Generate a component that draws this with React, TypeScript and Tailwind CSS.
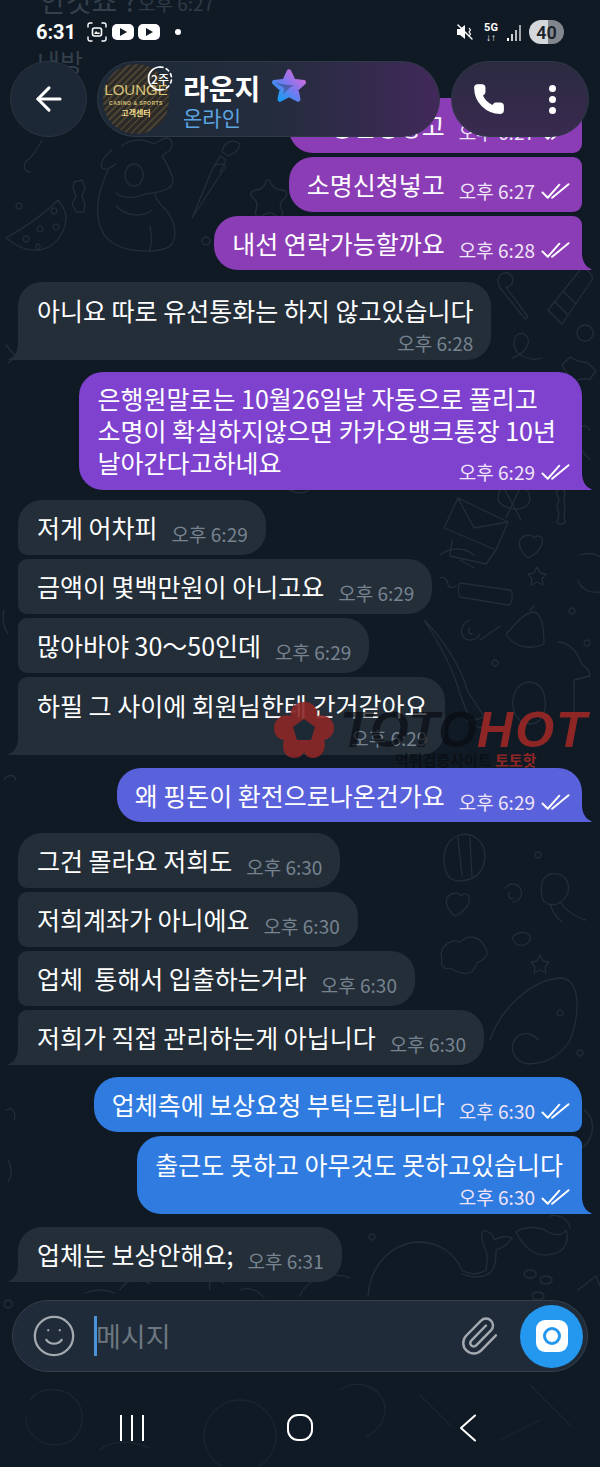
import React from 'react';
import { ArrowLeft, Phone, Smile, Paperclip } from 'lucide-react';

const KR = 'font-["Noto_Sans_CJK_KR","Noto_Sans",sans-serif]';

const DoubleCheck = () => (
  <svg viewBox="0 0 30 18" className="w-[29px] h-[18px]" fill="none" stroke="#ffffff" strokeWidth="2" strokeLinecap="round" strokeLinejoin="round">
    <path d="M1.500 10.500l5.500 5.500L19 2.500" />
    <path d="M11.500 16L28.500 2" />
  </svg>
);

interface MsgProps {
  side: 'in' | 'out';
  lines: string[];
  time: string;
  color?: string;
  tailColor?: string;
  first?: boolean;
  tail?: boolean;
  stacked?: boolean;
  inlineLast?: boolean;
  textPr?: string;
  top?: string;
}

const Msg = ({ side, lines, time, color = '', tailColor = '', first, tail, stacked, inlineLast, textPr = '', top = 'mt-1' }: MsgProps) => {
  const out = side === 'out';
  const shape = out
    ? `rounded-l-[24px] ${first ? 'rounded-tr-[24px]' : 'rounded-tr-[9px]'} ${tail ? 'rounded-br-none' : 'rounded-br-[9px]'}`
    : `rounded-r-[24px] ${first ? 'rounded-tl-[24px]' : 'rounded-tl-[9px]'} ${tail ? 'rounded-bl-none' : 'rounded-bl-[9px]'}`;
  const meta = (
    <div className={`flex items-center gap-[6px] text-[19px] leading-[24px] whitespace-nowrap ${out ? 'text-[#f0e4f8]' : 'text-[#77838f]'}`}>
      <span>{time}</span>
      {out && <DoubleCheck />}
    </div>
  );
  return (
    <div className={`flex ${top} ${out ? 'justify-end pr-[18px]' : 'justify-start pl-[18px]'}`}>
      <div className={`relative text-white ${shape} ${out ? `${color} pl-[18px] pr-[12px]` : 'bg-[#232e39] pl-[19px] pr-[18px]'}`}>
        {inlineLast ? (
          <div className="pt-[10px] pb-[12px]">
            {lines.slice(0, -1).map((l) => (
              <div key={l} className={`text-[25px] leading-[32px] whitespace-pre ${textPr}`}>{l}</div>
            ))}
            <div className="flex justify-between items-end">
              <div className="text-[25px] leading-[32px] whitespace-pre">{lines[lines.length - 1]}</div>
              <div className="-mb-[6px]">{meta}</div>
            </div>
          </div>
        ) : stacked ? (
          <div className="pt-[12px] pb-[5px]">
            {lines.map((l) => (
              <div key={l} className={`text-[25px] leading-[32px] whitespace-pre ${textPr}`}>{l}</div>
            ))}
            <div className="flex justify-end mt-[5px]">{meta}</div>
          </div>
        ) : (
          <div className={`${tail && out ? 'h-[54px]' : 'h-[55px]'} flex items-center gap-[14px]`}>
            <div className="text-[25px] leading-[32px] whitespace-pre -mt-[1px]">{lines[0]}</div>
            <div className="mt-[13px]">{meta}</div>
          </div>
        )}
        {tail && out && (
          <svg viewBox="0 0 12 16" className={`absolute -right-[10px] bottom-0 w-[12px] h-[16px] ${tailColor}`}>
            <path d="M0 0h2C2.500 8 6 13 11 15c1 .5 .5 1-.5 1H0z" fill="currentColor" />
          </svg>
        )}
        {tail && !out && (
          <svg viewBox="0 0 12 16" className="absolute -left-[10px] bottom-0 w-[12px] h-[16px] text-[#232e39]">
            <path d="M12 0h-2C9.500 8 6 13 1 15c-1 .5-.5 1 .5 1H12z" fill="currentColor" />
          </svg>
        )}
      </div>
    </div>
  );
};

// faint wallpaper doodles
const Doodles = () => (
  <svg viewBox="0 0 600 1467" className="absolute inset-0 w-[600px] h-[1467px]" fill="none" stroke="#212d39" strokeWidth="1.300" strokeLinecap="round" strokeLinejoin="round">
    {/* dog */}
    <path d="M112 150c-8 6-12 12-10 18 4 3 8 0 14-4M122 146c8-7 22-8 32-2 4-2 8-6 13-6 6 1 6 8 3 12l-8 6c5 7 8 14 10 20 3 6-1 12-7 14-8 3-18 3-25 6-10 3-20 1-24-3M134 164a9 11 0 1 0 .1 0" />
    <path d="M108 170c-8 18-14 36-8 56 4 14 18 22 32 24 14 2 34 2 40-6 6-10 2-26-8-36-4-4-8-8-9-14M150 226c2 10 2 16 0 24M116 206c10 10 26 12 36 4" />
    {/* brush */}
    <path d="M192 218l20-48c2-6 8-8 14-4l-34 52zM212 170l8-14 6 4-6 12M224 146c4-6 12-6 16-2-1 6-6 10-12 12l-6-4z" />
    {/* star */}
    <path d="M270 181c2 6 6 9 12 9 6 1 6 5 2 9-4 3-5 7-2 12 2 6-2 8-7 4-4-3-8-3-13 1-5 2-8-1-6-6 2-5 1-9-3-12-4-4-2-7 3-8 5 0 8-3 10-8 1-3 3-3 4-1z" />
    {/* watermelon */}
    <path d="M6 238c10 8 22 14 34 12 14-3 24-14 26-30 1-8-3-14-8-20-16 16-34 28-52 38zM26 236a3 3 0 1 0 .1 0M40 226a3 3 0 1 0 .1 0M56 224a3 3 0 1 0 .1 0M38 244a2 3 0 1 0 .1 0M54 208a3 3 0 1 0 .1 0" />
    {/* candy */}
    <path d="M74 182l8-2 3 8-3 8 3 8-1 8h-8l-4-8 4-8-3-8zM19 203a3 3 0 1 0 .1 0M206 237a4 4 0 1 0 .1 0" />
    <path d="M42 140c-4 8-8 14-14 20-6 4-4 12 2 12" />
    {/* upper right */}
    <path d="M500 275c4-3 10-3 12 2 2 5-1 10-6 10l22 30-3 2-24-30c-4-4-3-10-1-14zM548 310l32-40c4-4 14 4 12 10l-30 44zM555 302l12 12M564 292l12 12" />
    <path d="M512 358c8-2 14-8 16-14 2-8-6-14-12-8-4 6-2 16 6 20 10 4 14 4 20 2" />
    <path d="M562 365l8-8 8 4 10 2 8 8-6 8-10 0-6 4-6-8z" />
    <path d="M585 325a8 8 0 1 0 .1 0M590 430c-6-8-10-4-12 4-2 10 6 20 12 26M440 470c30 10 60 0 80-16" />
    {/* middle right */}
    <path d="M444 528l14-30 50 24-12 28zM458 498l16 30 34-6M452 540l-2 16 36 8 10-14" />
    <path d="M520 540c4-6 12-6 14-2 4-4 10-2 8 6-2 6-8 12-14 14-6-4-10-12-8-18z" />
    <path d="M498 500c4 10 28 14 32 0 0-14-14-20-26-14-4 2-6 8-6 14zM505 490l16 30M520 488l-14 30" />
    <path d="M556 492c2-4 8-4 9 0l-1 8 1 8-1 8 1 6c-1 3-7 3-8 0l2-8-2-8 2-6z" />
    <path d="M580 555c6-2 14-2 20 2M578 580c2 8 12 14 22 12" />
    <path d="M537 567l3 6 6 1-4 5 1 6-6-3-6 3 1-6-4-5 6-1z" />
    <path d="M460 583c-2 4-2 10 0 14l48 8c4 0 6-14 2-15zM440 578c4-2 8 2 8 6s4 4 8 2M572 608a3 3 0 1 0 .1 0M587 640a3 3 0 1 0 .1 0" />
    {/* bell, spiral, brush */}
    <path d="M506 634c8-8 18-22 28-22 8 2 10 18 10 32-12 6-30 4-38-10zM530 610l4-4M470 620c-6 2-10 8-8 14 2 8 14 8 18 0M470 628c-2 2-2 6 2 6" />
    <path d="M424 620c12 18 28 46 36 74l10 26c6 0 12-2 14-4l-16-24c-8-28-26-54-44-72zM466 720l14 8 10-8M495 660a3 3 0 1 0 .1 0" />
    <path d="M558 642c12 0 20 12 24 22 4 4 8 6 8 12l-16 4v44M516 690c8-12 24-10 28 4 4 16-2 30-14 30-14 0-22-18-14-34z" />
    {/* left / centre mid */}
    <path d="M6 345l10 12-8 6M4 610c-2 10 0 18 4 24M4 780c4-6 10-6 12 0M6 1110c8-4 10 4 8 10M8 1160c4 8 4 16 0 22" />
    {/* between bubbles */}
    <path d="M290 490c6 4 14 4 18 0M440 555c10-8 24-8 34 0M480 640l20-14M460 560l14 8" />
    {/* shell, heart, jellyfish */}
    <path d="M446 848c4-12 20-18 30-10 10 6 12 22 4 34-6 8-22 12-30 6-6-6-8-20-4-30zM458 838l4 38M470 838l2 38" />
    <path d="M447 898c4-6 12-6 14-2 4-4 10-2 8 6-2 6-8 12-14 14-6-4-10-12-8-18z" />
    <path d="M505 888a9 9 0 1 1 8 14M510 892a3 3 0 1 0 4 6" />
    <path d="M543 880c4-8 16-8 22-2 6 8 4 18-4 24-6 4-14 4-18-2-2-6-2-14 0-20zM550 904c2 6 6 14 12 18M560 902c4 6 12 14 26 18M538 852a3 3 0 1 0 .1 0" />
    <path d="M442 960c-4-12 8-22 18-18 8-8 20-6 24 4 6 6 2 14-6 16l-6 10c-10 4-18-2-22-4-6 2-10-2-8-8zM512 938c4-6 14-8 18-2 2 6-6 12-14 8zM540 955l3 6 6 1-4 5 1 6-6-3-6 3 1-6-4-5 6-1z" />
    <path d="M490 1040c10-30 40-60 70-62 18 0 20 26 14 50-4 22-24 36-46 36-14-2-20-16-12-26 6-6 16-6 22 2M560 1010a3 3 0 1 0 .1 0M580 1050a3 3 0 1 0 .1 0" />
    <path d="M584 1110c6 4 10 12 8 22-2 10-10 18-12 14" />
    {/* whale, cookie */}
    <path d="M368 1296c2-30 22-52 50-54 20 0 36 10 44 28 6 4 16 6 24 0 2-10 2-18-2-24-2-6-4-12 0-16 6 2 10 6 10 10 6-4 14-4 18-2-4 6-10 10-16 12 0 10 0 22-12 26-10 2-16 0-22-2" />
    <path d="M516 1232c8-6 24-6 32 0 8 4 14 4 18-2 4 12-2 22-14 24-12 4-26-2-36-22zM550 1216c8-2 18 2 20 12M372 1234a3 3 0 1 0 .1 0" />
    <path d="M530 1270a6 4 0 1 0 .1 0M546 1276a6 4 0 1 0 .1 0M538 1292a6 4 0 1 0 .1 0M578 1290l18-14 4 10" />
    <path d="M365 1152c-4-4-8 2-6 6M300 1296c6-16 30-26 50-18M210 1290c-4-12 10-14 14-6M120 1290c6-12 22-12 30-6M8 1300a4 4 0 1 0 .1 0M85 1293c10-4 20-4 30 0M240 1290c10-4 20 2 24 8" />
    {/* nav area, fainter */}
    <g opacity="0.6">
      <path d="M30 1400c10-14 34-14 46 0s6 40-14 44-36-10-36-26M240 1400a36 36 0 1 0 .1 0M340 1390c14-10 34-6 42 8s-2 34-16 38M420 1395l30 30M530 1385l40 40M500 1440l40-20M100 1450c10-10 30-10 50-2" />
    </g>
  </svg>
);

export default function App() {
  return (
    <div className={`relative w-[600px] h-[1467px] overflow-hidden bg-[#101a25] ${KR} flex flex-col`}>
      <Doodles />

      {/* faded previous messages behind status bar */}
      <div className="absolute left-[40px] -top-[17px] text-[28px] leading-[34px] text-[#333f4b] whitespace-nowrap">안것죠 ?</div>
      <div className="absolute left-[138px] -top-[9px] text-[19px] leading-[24px] text-[#2f3b47] whitespace-nowrap">오후 6:27</div>
      <div className="absolute left-[37px] top-[44px] text-[25px] leading-[34px] text-[#333f4b]">내방</div>

      {/* chat */}
      <div className="relative h-[1300px] pb-[18px] flex flex-col justify-end">
        <Msg side="out" lines={['소명신청넣고']} time="오후 6:27" color="bg-[#8b3db6]" />
        <Msg side="out" lines={['소명신청넣고']} time="오후 6:27" color="bg-[#8b3db6]" />
        <Msg side="out" lines={['내선 연락가능할까요']} time="오후 6:28" color="bg-[#8b3db6]" tailColor="text-[#8b3db6]" tail />
        <Msg side="in" lines={['아니요 따로 유선통화는 하지 않고있습니다']} time="오후 6:28" first tail stacked top="mt-3" />
        <Msg side="out" lines={['은행원말로는 10월26일날 자동으로 풀리고', '소명이 확실하지않으면 카카오뱅크통장 10년', '날아간다고하네요']} time="오후 6:29" color="bg-[#7e42cf]" tailColor="text-[#7e42cf]" first tail inlineLast textPr="pr-[14px]" top="mt-3" />
        <Msg side="in" lines={['저게 어차피']} time="오후 6:29" first top="mt-[10px]" />
        <Msg side="in" lines={['금액이 몇백만원이 아니고요']} time="오후 6:29" />
        <Msg side="in" lines={['많아바야 30～50인데']} time="오후 6:29" />
        <Msg side="in" lines={['하필 그 사이에 회원님한테 간거같아요']} time="오후 6:29" tail stacked />
        <Msg side="out" lines={['왜 핑돈이 환전으로나온건가요']} time="오후 6:29" color="bg-[#5961db]" tailColor="text-[#5961db]" first tail top="mt-[13px]" />
        <Msg side="in" lines={['그건 몰라요 저희도']} time="오후 6:30" first top="mt-[11px]" />
        <Msg side="in" lines={['저희계좌가 아니에요']} time="오후 6:30" />
        <Msg side="in" lines={['업체  통해서 입출하는거라']} time="오후 6:30" />
        <Msg side="in" lines={['저희가 직접 관리하는게 아닙니다']} time="오후 6:30" tail />
        <Msg side="out" lines={['업체측에 보상요청 부탁드립니다']} time="오후 6:30" color="bg-[#2f7be0]" first top="mt-3" />
        <Msg side="out" lines={['출근도 못하고 아무것도 못하고있습니다']} time="오후 6:30" color="bg-[#2f7be0]" tailColor="text-[#2f7be0]" tail stacked textPr="pr-[7px]" />
        <Msg side="in" lines={['업체는 보상안해요;']} time="오후 6:31" first tail top="mt-[13px]" />
      </div>

      {/* input bar */}
      <div className="relative mx-[12px] h-[72px] rounded-[36px] bg-[#1f2b38] border border-[#343f4a] flex items-center pl-[18px] pr-[4px]">
        <Smile size={46} strokeWidth={1.2} className="text-[#a3a9af]" />
        <div className="ml-[17px] w-[3px] h-[40px] bg-[#4a93d8]" />
        <span className="text-[27px] text-[#6d7780] -ml-px">메시지</span>
        <Paperclip size={42} strokeWidth={1.4} className="ml-auto mr-[20px] text-[#a3a9af]" />
        <div className="w-[63px] h-[63px] rounded-full bg-[#2497ee] flex items-center justify-center">
          <div className="w-[32px] h-[32px] rounded-[9px] bg-white flex items-center justify-center">
            <div className="w-[18px] h-[18px] rounded-full border-[3px] border-[#2497ee]" />
          </div>
        </div>
      </div>

      {/* nav bar */}
      <div className="relative flex-1 flex items-center justify-center pt-[16px]">
        <div className="w-[168px] flex justify-center">
          <div className="flex gap-[9px]">
            <div className="w-[2px] h-[26px] bg-white" />
            <div className="w-[2px] h-[26px] bg-white" />
            <div className="w-[2px] h-[26px] bg-white" />
          </div>
        </div>
        <div className="w-[168px] flex justify-center">
          <div className="w-[26px] h-[27px] rounded-[11px] border-2 border-white" />
        </div>
        <div className="w-[168px] flex justify-center">
          <svg viewBox="0 0 18 28" className="w-[18px] h-[28px]" fill="none" stroke="white" strokeWidth="2" strokeLinecap="round" strokeLinejoin="round">
            <path d="M16 1.500L2 14l14 12.500" />
          </svg>
        </div>
      </div>

      {/* status bar */}
      <div className="absolute top-[19px] left-[36px] right-[36px] h-[26px] flex items-center text-white">
        <span className="text-[20px] font-bold font-['Roboto',sans-serif]">6:31</span>
        <svg viewBox="0 0 20 20" className="ml-[11px] w-[20px] h-[20px]" fill="none" stroke="white" strokeWidth="1.400" strokeLinecap="round">
          <path d="M1 5V3a2 2 0 0 1 2-2h2M15 1h2a2 2 0 0 1 2 2v2M19 15v2a2 2 0 0 1-2 2h-2M5 19H3a2 2 0 0 1-2-2v-2" />
          <rect x="5.500" y="6" width="9" height="8" rx="2" fill="none" stroke="white" strokeWidth="1.600" />
          <path d="M7 12l2-3 2 2 1-1 1 2z" fill="white" stroke="none" />
        </svg>
        <div className="ml-[5px] w-[22px] h-[16px] rounded-[5px] bg-white flex items-center justify-center">
          <div className="w-0 h-0 border-y-[4px] border-y-transparent border-l-[7px] border-l-[#101a25]" />
        </div>
        <div className="ml-[4px] w-[22px] h-[16px] rounded-[5px] bg-white flex items-center justify-center">
          <div className="w-0 h-0 border-y-[4px] border-y-transparent border-l-[7px] border-l-[#101a25]" />
        </div>
        <div className="ml-[15px] w-[6px] h-[6px] rounded-full bg-white" />
        <svg viewBox="0 0 18 18" className="ml-auto w-[18px] h-[18px]" fill="white">
          <path d="M1 6h3l5-4v14l-5-4H1z" />
          <path d="M2 2l14 14" stroke="white" strokeWidth="1.400" strokeLinecap="round" />
          <path d="M13 5l1.500 2-1.500 2 1.500 2-1.500 2" fill="none" stroke="white" strokeWidth="1.200" />
        </svg>
        <div className="ml-[8px] w-[18px] flex flex-col items-center text-[11px] leading-[11px] font-bold font-['Roboto',sans-serif]">
          <span>5G</span>
          <span className="text-[10px] leading-[9px]">↓↑</span>
        </div>
        <div className="ml-[7px] flex items-end gap-[2px] h-[17px]">
          <div className="w-[2px] h-[3px] bg-white" />
          <div className="w-[2px] h-[7px] bg-white/80" />
          <div className="w-[2px] h-[11px] bg-white/70" />
          <div className="w-[2px] h-[16px] bg-white/60" />
        </div>
        <div className="ml-[8px] w-[35px] h-[24px] rounded-full bg-[linear-gradient(90deg,#d5d8da_55%,#80868c_55%)] flex items-center justify-center text-[18px] font-semibold text-[#1a222b] font-['Roboto',sans-serif]">
          40
        </div>
      </div>

      {/* header */}
      <div className="absolute top-[61px] left-[10px] w-[77px] h-[76px] rounded-full bg-[#1c2835] border border-[#28343f] flex items-center justify-center text-white">
        <ArrowLeft size={38} strokeWidth={1.900} />
      </div>
      <div className="absolute top-[61px] left-[97px] w-[343px] h-[76px] rounded-full border border-[#2d3945] bg-[linear-gradient(90deg,#1d2a38_0%,#232c3c_50%,#41295a_100%)] flex items-center pl-[5px]">
        <div className="relative w-[66px] h-[70px] rounded-full overflow-hidden bg-[repeating-linear-gradient(135deg,#2c2a26_0px,#2c2a26_3px,#4a4232_3px,#4a4232_5px)] flex flex-col items-center justify-center text-[#d9c27a]">
          <span className="text-[15px] leading-[18px] font-['Liberation_Sans',sans-serif] whitespace-nowrap">LOUNGE</span>
          <span className="text-[5px] leading-[8px] font-bold tracking-[0.5px] font-['Liberation_Sans',sans-serif] whitespace-nowrap">CASINO &amp; SPORTS</span>
          <span className="text-[8px] leading-[11px] font-bold text-[#f4dd8c] whitespace-nowrap">고객센터</span>
        </div>
        <div className="ml-[14px] -mt-[1px]">
          <div className="flex items-center gap-[10px]">
            <span className="text-[28px] leading-[38px] font-bold text-white whitespace-nowrap">라운지</span>
            <svg viewBox="0 0 40 40" className="w-[38px] h-[38px] -mt-[4px]">
              <defs>
                <linearGradient id="star" x1="0.1" y1="0.9" x2="0.9" y2="0.1">
                  <stop offset="0" stopColor="#1a9cf2" />
                  <stop offset="0.5" stopColor="#7a78ee" />
                  <stop offset="1" stopColor="#d06cdc" />
                </linearGradient>
              </defs>
              <path d="M20 5l4.600 9.800 10.900 1.300-8 7.400 2.100 10.700L20 29l-9.600 5.200 2.100-10.700-8-7.400 10.900-1.300z" fill="url(#star)" stroke="url(#star)" strokeWidth="5" strokeLinejoin="round" />
              <path d="M5 16c7 2 13 3 20 3-5 3-8 6-11 10l1-7z" fill="#18263a" opacity="0.35" />
            </svg>
          </div>
          <div className="text-[21px] leading-[24px] text-[#5ba4e0] -mt-[2px]">온라인</div>
        </div>
        {/* story ring */}
        <div className="absolute left-[49px] top-[3px] w-[26px] h-[27px] flex items-center justify-center text-white text-[12px] font-medium whitespace-nowrap">
          <svg viewBox="0 0 26 26" className="absolute inset-0 w-[26px] h-[27px]" fill="none" stroke="white" strokeWidth="1.700" strokeLinecap="round">
            <path d="M13 1.500A11.500 11.500 0 0 0 13 24.500" />
            <path d="M13 1.500A11.500 11.500 0 0 1 13 24.500" strokeDasharray="3 3.500" />
          </svg>
          2주
        </div>
      </div>
      <div className="absolute top-[61px] left-[451px] w-[138px] h-[76px] rounded-full border border-[#2d3945] bg-[linear-gradient(180deg,#2a2a40_0%,#3a2a50_100%)] flex items-center text-white">
        <Phone size={34} fill="white" strokeWidth={1} className="ml-[20px]" />
        <div className="ml-[43px] flex flex-col gap-[4px]">
          <div className="w-[7px] h-[7px] rounded-full bg-white" />
          <div className="w-[7px] h-[7px] rounded-full bg-white" />
          <div className="w-[7px] h-[7px] rounded-full bg-white" />
        </div>
      </div>

      {/* watermark */}
      <div className="absolute left-[272px] top-[700px] w-[328px] h-[72px] pointer-events-none">
        <div className="flex items-center">
          <svg viewBox="0 0 64 60" className="w-[64px] h-[60px]">
            <path d="M32 2c10 0 15 8 13 14 8-3 17 3 17 12 0 7-5 11-10 12 3 8-2 18-11 18-5 0-8-3-9-6-1 3-5 6-10 6-9 0-13-9-10-18C6 39 2 35 2 28c0-9 9-15 17-12-2-6 3-14 13-14z" fill="#8c2727" opacity="0.9" />
            <path d="M32 19l11 8-4 13H25l-4-13z" fill="#1c2a36" />
          </svg>
          <span className="ml-[4px] text-[50px] leading-[56px] font-bold italic font-['Liberation_Sans',sans-serif] text-[#0a0d12]/70">TOTO</span>
          <span className="text-[50px] leading-[56px] font-bold italic tracking-[2px] font-['Liberation_Sans',sans-serif] text-[#8f2626]">HOT</span>
        </div>
        <div className="absolute left-[123px] top-[51px] text-[15px] leading-[18px] font-bold whitespace-nowrap text-[#0a0d12]/80">
          먹튀검증사이트 <span className="text-[#8f2626]">토토핫</span>
        </div>
      </div>
    </div>
  );
}
